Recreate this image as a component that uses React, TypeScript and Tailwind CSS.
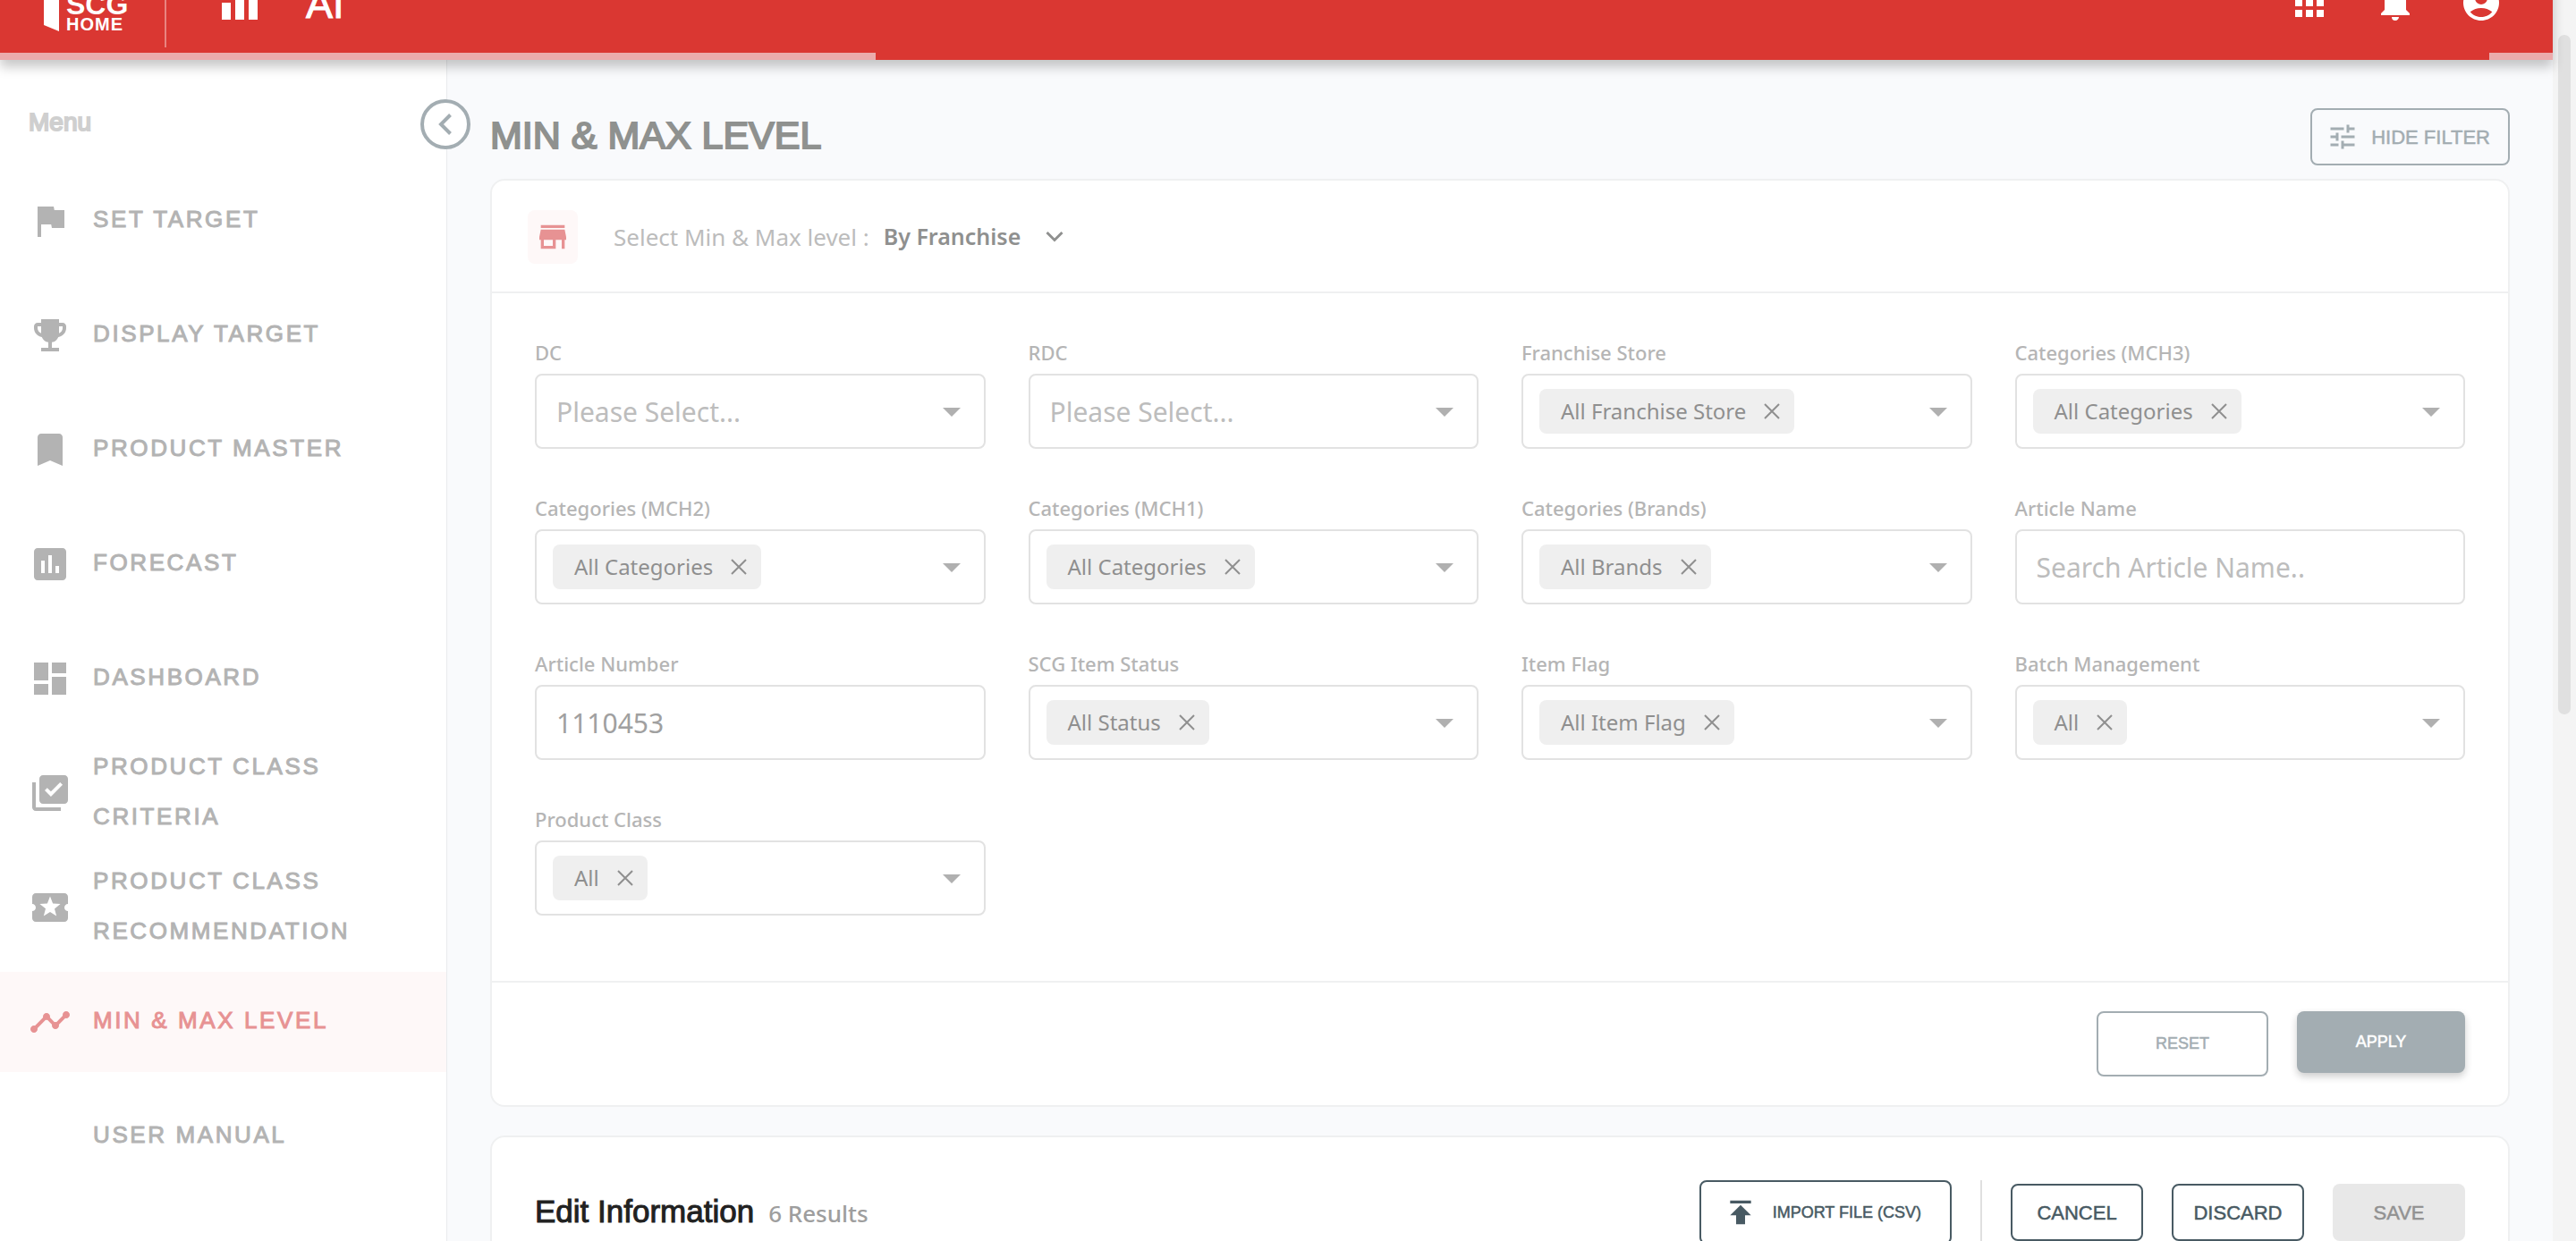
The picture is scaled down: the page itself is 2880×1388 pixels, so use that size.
import type { ReactNode } from "react";
import type { IconType } from "react-icons";
import {
  MdAccountCircle,
  MdApps,
  MdArrowDropDown,
  MdAssessment,
  MdBookmark,
  MdDashboard,
  MdEmojiEvents,
  MdFlag,
  MdLibraryAddCheck,
  MdLocalActivity,
  MdNotifications,
  MdPublish,
  MdStore,
  MdTimeline,
  MdTune,
} from "react-icons/md";

type MenuItem = { label: string; icon?: IconType; active?: boolean };

const menuItems: MenuItem[] = [
  { label: "SET TARGET", icon: MdFlag },
  { label: "DISPLAY TARGET", icon: MdEmojiEvents },
  { label: "PRODUCT MASTER", icon: MdBookmark },
  { label: "FORECAST", icon: MdAssessment },
  { label: "DASHBOARD", icon: MdDashboard },
  { label: "PRODUCT CLASS CRITERIA", icon: MdLibraryAddCheck },
  { label: "PRODUCT CLASS RECOMMENDATION", icon: MdLocalActivity },
  { label: "MIN & MAX LEVEL", icon: MdTimeline, active: true },
  { label: "USER MANUAL" },
];

type Field = {
  id: string;
  label: string;
  kind: "select" | "chips" | "text";
  value?: string;
  placeholder?: string;
};

const fields: Field[] = [
  { id: "dc", label: "DC", kind: "select" },
  { id: "rdc", label: "RDC", kind: "select" },
  { id: "store", label: "Franchise Store", kind: "chips", value: "All Franchise Store" },
  { id: "mch3", label: "Categories (MCH3)", kind: "chips", value: "All Categories" },
  { id: "mch2", label: "Categories (MCH2)", kind: "chips", value: "All Categories" },
  { id: "mch1", label: "Categories (MCH1)", kind: "chips", value: "All Categories" },
  { id: "brands", label: "Categories (Brands)", kind: "chips", value: "All Brands" },
  { id: "name", label: "Article Name", kind: "text", placeholder: "Search Article Name.." },
  { id: "number", label: "Article Number", kind: "text", value: "1110453" },
  { id: "status", label: "SCG Item Status", kind: "chips", value: "All Status" },
  { id: "flag", label: "Item Flag", kind: "chips", value: "All Item Flag" },
  { id: "batch", label: "Batch Management", kind: "chips", value: "All" },
  { id: "class", label: "Product Class", kind: "chips", value: "All" },
];

function Logo() {
  return (
    <div className="flex items-end gap-2 text-white" aria-label="SCG Home">
      <svg className="h-[84px] w-[17px]" viewBox="0 0 17 84" fill="currentColor" aria-hidden="true">
        <path d="M0 0H17V84L0 77Z" />
      </svg>
      <div className="flex flex-col">
        <span className="text-[32px] leading-7 font-bold">SCG</span>
        <span className="text-[20px] leading-4 font-bold tracking-wider">HOME</span>
      </div>
    </div>
  );
}

function TopBar() {
  return (
    <header className="relative z-20 -mt-[61px] flex h-32 shrink-0 items-center bg-[#da3732] pr-14 pl-[49px] text-white shadow-[0_8px_12px_0px_rgba(0,0,0,0.22)]">
      <div className="-mt-5 w-[135px] shrink-0">
        <Logo />
      </div>
      <div className="h-[100px] w-0.5 bg-[#e98480]" />
      <svg className="ml-[62px] h-[50px] w-10" viewBox="0 0 40 50" fill="currentColor" aria-hidden="true">
        <rect x="0" y="25" width="10" height="19" />
        <rect x="15" y="14" width="10" height="30" />
        <rect x="30" y="4" width="10" height="40" />
      </svg>
      <span className="ml-[54px] pt-1 text-[45px] leading-[46px] [-webkit-text-stroke:1px_currentColor]">AI</span>
      <div className="ml-auto flex gap-12">
        <button type="button" aria-label="Apps">
          <MdApps size={48} />
        </button>
        <button type="button" aria-label="Notifications">
          <MdNotifications size={48} />
        </button>
        <button type="button" aria-label="Account">
          <MdAccountCircle size={48} />
        </button>
      </div>
      <div className="absolute inset-x-0 bottom-0 flex h-2 justify-between">
        <div className="w-[34.3%] bg-[#ebabac]" />
        <div className="w-[2.5%] bg-[#ebabac]" />
      </div>
    </header>
  );
}

function Sidebar() {
  return (
    <aside className="relative z-10 w-[500px] shrink-0 border-r border-[#e9ebed] bg-white pt-[54px]">
      <button
        type="button"
        aria-label="Collapse menu"
        className="absolute top-11 -right-[27px] grid size-14 place-items-center rounded-full border-4 border-[#a3adb2] bg-white text-[#a3adb2]"
      >
        <svg className="h-6 w-4" viewBox="0 0 16 24" fill="none" stroke="currentColor" strokeWidth="4" aria-hidden="true">
          <path d="M13.500 1.500L3 12L13.500 22.500" />
        </svg>
      </button>
      <h2 className="mb-[38px] px-8 text-[28px] leading-8 text-[#cfcfcf] [-webkit-text-stroke:2px_currentColor]">Menu</h2>
      <nav className="flex flex-col gap-4">
        {menuItems.map(({ label, icon: Icon, active }) => (
          <a
            key={label}
            href="#"
            className={`flex h-28 items-center gap-6 pr-20 pl-8 text-[26px] leading-14 tracking-widest [-webkit-text-stroke:1px_currentColor] ${
              active ? "bg-[#fef8f8] text-[#e79293]" : "text-[#b3b3b3]"
            }`}
          >
            <span className="size-12 shrink-0">{Icon && <Icon size={48} strokeWidth={0} />}</span>
            <span className="pb-1">{label}</span>
          </a>
        ))}
      </nav>
    </aside>
  );
}

function Chip({ children }: { children: ReactNode }) {
  return (
    <span className="flex h-[50px] items-center gap-5 rounded-lg bg-[#efefef] pr-4 pl-6 text-[24px] text-[#8f8f8f]">
      {children}
      <button type="button" aria-label={`Remove ${children}`}>
        <svg className="size-[18px]" viewBox="0 0 18 18" stroke="currentColor" strokeWidth="2" aria-hidden="true">
          <path d="M1 1L17 17M17 1L1 17" />
        </svg>
      </button>
    </span>
  );
}

function FilterField({ id, label, kind, value, placeholder }: Field) {
  const box = "h-[84px] w-full rounded-lg border-2 border-[#e2e2e2] bg-white";
  return (
    <div className="flex flex-col gap-2 font-['Noto_Sans',sans-serif]">
      <label id={`${id}-label`} htmlFor={id} className="text-[22px] leading-8 font-medium text-[#b5b5b5]">
        {label}
      </label>
      {kind === "text" && (
        <input
          id={id}
          type="text"
          defaultValue={value}
          placeholder={placeholder}
          className={`${box} px-[22px] text-[30px] text-[#a0a0a0] placeholder:text-[#bdbdbd]`}
        />
      )}
      {kind === "select" && (
        <div className="relative">
          <select id={id} className={`${box} appearance-none px-[22px] text-[30px] text-[#bdbdbd]`}>
            <option>Please Select...</option>
          </select>
          <MdArrowDropDown size={48} className="pointer-events-none absolute top-[18px] right-3.5 text-[#b0b0b0]" />
        </div>
      )}
      {kind === "chips" && (
        <div className={`${box} flex items-center justify-between pr-3 pl-[18px]`}>
          <Chip>{value}</Chip>
          <button id={id} type="button" aria-labelledby={`${id}-label`} aria-haspopup="listbox" className="text-[#b0b0b0]">
            <MdArrowDropDown size={48} />
          </button>
        </div>
      )}
    </div>
  );
}

const card = "rounded-2xl border-2 border-[#eff0f1] bg-white";
const darkOutline = "rounded-lg border-2 border-[#485a63] text-[#485a63] [-webkit-text-stroke:0.5px_currentColor]";

export default function App() {
  return (
    <div className="flex h-screen overflow-hidden bg-[#f4f4f4] font-['Liberation_Sans',Arial,sans-serif]">
      <div className="flex min-w-0 flex-1 flex-col">
        <TopBar />
        <div className="flex min-h-0 flex-1">
          <Sidebar />
          <main className="min-w-0 flex-1 bg-[#f9fafc] px-12 pt-[54px]">
            <div className="mb-[15px] flex items-center justify-between">
              <h1 className="pb-1 text-[43px] leading-[48px] text-[#8f918f] [-webkit-text-stroke:2px_currentColor]">
                MIN &amp; MAX LEVEL
              </h1>
              <button
                type="button"
                className="flex h-16 items-center gap-3.5 rounded-lg border-2 border-[#a3adb2] pr-5 pl-4 text-[22px] text-[#a3adb2] [-webkit-text-stroke:0.5px_currentColor]"
              >
                <MdTune size={36} strokeWidth={0} />
                HIDE FILTER
              </button>
            </div>

            <section className={card}>
              <div className="flex h-[126px] items-center border-b-2 border-[#eff0f1] pt-0.5 pl-10 font-['Noto_Sans',sans-serif] text-[26px]">
                <span className="mr-10 grid h-15 w-14 place-items-center rounded-lg bg-[#fef8f8] text-[#e79293]">
                  <MdStore size={40} />
                </span>
                <label htmlFor="level" className="text-[#bcbcbc]">
                  Select Min &amp; Max level :
                </label>
                <div className="relative ml-4 flex items-center">
                  <select id="level" className="appearance-none pr-12 text-[25px] font-semibold text-[#8f908f] [field-sizing:content]">
                    <option>By Franchise</option>
                  </select>
                  <svg
                    className="pointer-events-none absolute right-0 h-3.5 w-5 text-[#8f908f]"
                    viewBox="0 0 20 14"
                    fill="none"
                    stroke="currentColor"
                    strokeWidth="3"
                    aria-hidden="true"
                  >
                    <path d="M1.500 2L10 10.500L18.500 2" />
                  </svg>
                </div>
              </div>

              <form className="grid grid-cols-4 gap-x-12 gap-y-[50px] px-12 pt-[50px] pb-[73px]">
                {fields.map((field) => (
                  <FilterField key={field.id} {...field} />
                ))}
              </form>

              <div className="flex items-start justify-end gap-8 border-t-2 border-[#eff0f1] px-12 py-8 text-[18px] [-webkit-text-stroke:0.5px_currentColor]">
                <button type="button" className="h-[73px] w-48 rounded-lg border-2 border-[#a3adb2] text-[#a3adb2]">
                  RESET
                </button>
                <button
                  type="button"
                  className="h-[69px] w-47 rounded-lg bg-[#a3adb2] text-white shadow-[0_4px_8px_rgba(0,0,0,0.2)]"
                >
                  APPLY
                </button>
              </div>
            </section>

            <section className={`${card} mt-8 flex items-center justify-between px-12 py-12`}>
              <div className="flex items-baseline gap-4">
                <h2 className="text-[35px] leading-10 text-[#212121] [-webkit-text-stroke:1px_currentColor]">
                  Edit Information
                </h2>
                <span className="font-['Noto_Sans',sans-serif] text-[26px] leading-10 font-medium text-[#9e9e9e]">6 Results</span>
              </div>
              <div className="flex items-center gap-8 text-[22px]">
                <button type="button" className={`${darkOutline} flex h-[72px] items-center gap-4 pr-8 pl-6 text-[18px]`}>
                  <MdPublish size={40} strokeWidth={0} />
                  IMPORT FILE (CSV)
                </button>
                <div className="h-[72px] w-0.5 bg-[#e0e0e0]" />
                <button type="button" className={`${darkOutline} h-16 w-37`}>
                  CANCEL
                </button>
                <button type="button" className={`${darkOutline} h-16 w-37`}>
                  DISCARD
                </button>
                <button type="button" disabled className="h-16 w-37 rounded-lg bg-[#e8e8e8] text-[#929292] [-webkit-text-stroke:0.5px_currentColor]">
                  SAVE
                </button>
              </div>
            </section>
          </main>
        </div>
      </div>
      <div className="w-[26px] shrink-0 bg-[#f4f4f4] px-1.5 pt-[39px]" aria-hidden="true">
        <div className="h-[760px] rounded-full bg-[#e0e0e0]" />
      </div>
    </div>
  );
}
